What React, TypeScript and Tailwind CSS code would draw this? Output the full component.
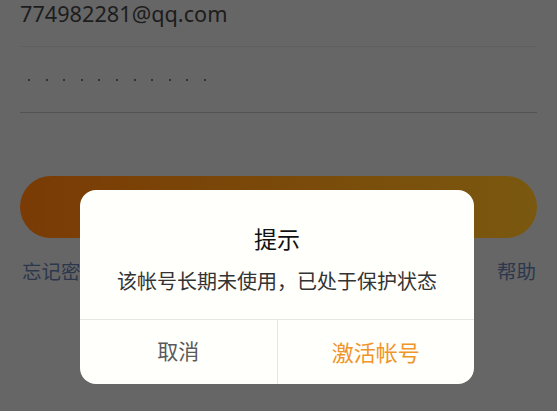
import React from 'react';

const dots = [...Array(11)];

export default function App() {
  return (
    <div
      className="relative w-[557px] h-[411px] overflow-hidden bg-[#666666]"
      style={{ fontFamily: '"Noto Sans", "Noto Sans CJK SC", sans-serif' }}
    >
      {/* Login form (dimmed behind the dialog) */}
      <div className="px-[20px]">
        <div className="h-[47px] border-b border-[#5f5f5f] flex items-start">
          <span className="text-[21.7px] leading-[30px] text-[#1d1d1d] -mt-[1px]">774982281@qq.com</span>
        </div>
        <div className="h-[66px] border-b border-[#535353] flex items-center pl-[8px] gap-[15.6px]">
          {dots.map((_, i) => (
            <div key={i} className="w-[2px] h-[2px] rounded-full bg-[#222]" />
          ))}
        </div>
        <div className="mt-[63px] h-[62px] rounded-full bg-linear-to-r/srgb from-[#7a3b05] to-[#7a580f]" />
        <div className="mt-[20px] flex justify-between text-[19.5px] leading-[28px] text-[#2d374c]">
          <span className="ml-[2px]">忘记密码</span>
          <span className="mr-[1px]">帮助</span>
        </div>
      </div>

      {/* Dialog */}
      <div className="absolute left-[80px] top-[190px] w-[394px] h-[194px] rounded-[16px] bg-[#fffffc] flex flex-col">
        <div className="flex-1 flex flex-col items-center">
          <div className="mt-[34px] text-[23px] leading-[30px] text-[#111]">提示</div>
          <div className="mt-[14px] text-[20px] leading-[28px] text-[#333]">该帐号长期未使用，已处于保护状态</div>
        </div>
        <div className="h-[65px] border-t border-[#e6e6e2] flex">
          <div className="flex-1 flex items-center justify-center border-r border-[#e6e6e2] text-[21px] text-[#5a5a5a]">取消</div>
          <div className="flex-1 flex items-center justify-center text-[22px] text-[#f0952a]">激活帐号</div>
        </div>
      </div>
    </div>
  );
}
